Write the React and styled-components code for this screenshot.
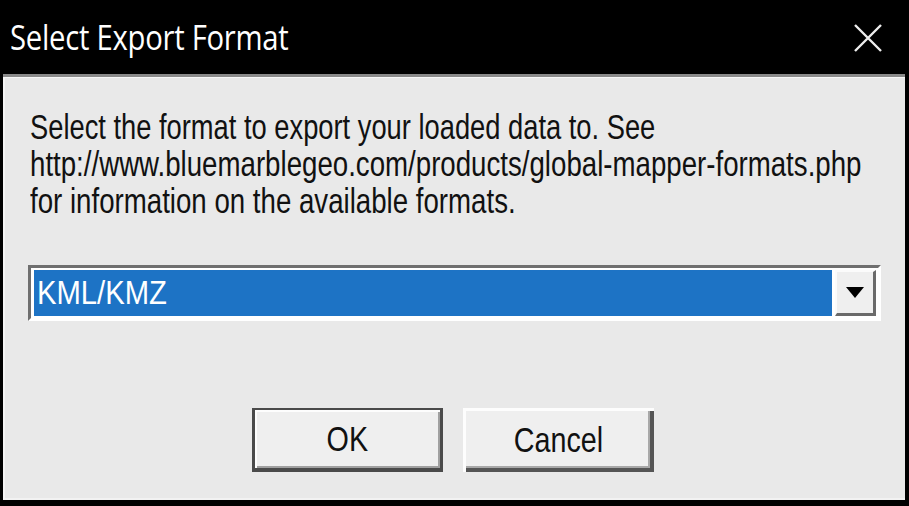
import React from 'react'
import styled, { createGlobalStyle } from 'styled-components'

const GlobalStyle = createGlobalStyle`
  html, body {
    margin: 0;
    padding: 0;
    background: #000;
  }
  #root {
    width: 909px;
    height: 506px;
    overflow: hidden;
  }
`

const Window = styled.div`
  box-sizing: border-box;
  width: 909px;
  height: 506px;
  background: #000;
  padding: 0 4px 6px 3px;
  display: flex;
  flex-direction: column;
  overflow: hidden;
  font-family: 'Liberation Sans', Arial, sans-serif;
`

const TitleBar = styled.div`
  height: 74px;
  flex: none;
  display: flex;
  align-items: center;
  justify-content: space-between;
  padding: 0 20px 0 7px;
  border-bottom: 3px solid #8a8a8a;
`

const Stretch = styled.span`
  display: inline-block;
  white-space: nowrap;
  transform: scaleX(${(p) => p.$sx || 0.8});
  transform-origin: ${(p) => (p.$center ? 'center' : 'left')} center;
`

const Title = styled.div`
  color: #fff;
  font-family: 'Open Sans', 'Noto Sans', sans-serif;
  font-size: 34px;
  line-height: 40px;
  letter-spacing: -0.3px;
`

const CloseButton = styled.div`
  width: 34px;
  height: 34px;
  display: flex;
  align-items: center;
  justify-content: center;
  margin-top: 2px;
`

const Body = styled.div`
  flex: 1;
  background: #e9e9e9;
  border-top: 1px solid #f7f7f7;
  border-left: 2px solid #f4f4f4;
  border-bottom: 2px solid #f2f2f2;
  padding: 30px 0 0 23px;
  display: flex;
  flex-direction: column;
  overflow: hidden;
`

const Message = styled.div`
  color: #111;
  font-size: 35px;
  line-height: 37px;
  padding-left: 2px;
`

const Line = styled.div`
  height: 37px;
`

const Combo = styled.div`
  box-sizing: border-box;
  margin-top: 46px;
  width: 853px;
  height: 56px;
  display: flex;
  border-top: 3px solid #6f6f6f;
  border-left: 3px solid #6f6f6f;
  border-right: 3px solid #fff;
  border-bottom: 3px solid #fff;
  background: #fff;
  padding: 2px 2px 2px 3px;
  gap: 3px;
`

const Selected = styled.div`
  flex: 1;
  background: #1d73c5;
  color: #fff;
  font-size: 34px;
  line-height: 44px;
  padding-left: 3px;
  overflow: hidden;
`

const DropButton = styled.div`
  box-sizing: border-box;
  width: 41px;
  background: #efefef;
  border-top: 2px solid #fbfbfb;
  border-left: 2px solid #fbfbfb;
  border-right: 3px solid #6a6a6a;
  border-bottom: 3px solid #6a6a6a;
  display: flex;
  align-items: center;
  justify-content: center;
`

const Buttons = styled.div`
  display: flex;
  justify-content: center;
  gap: 20px;
  margin-top: 87px;
  padding-right: 27px;
`

const Button = styled.div`
  box-sizing: border-box;
  width: 191px;
  height: 64px;
  background: #efefef;
  color: #111;
  font-size: 35px;
  display: flex;
  align-items: center;
  justify-content: center;
  border: ${(p) => (p.$default ? '3px solid #4a4a4a' : 'none')};
  border-top-width: 2px;
  border-left-width: 3px;
  border-bottom-width: 4px;
  box-shadow: ${(p) =>
    p.$default
      ? 'inset 2px 2px 0 #fdfdfd, inset -2px -2px 0 #a0a0a0'
      : 'inset 3px 3px 0 #fdfdfd, inset -4px -4px 0 #555, inset -6px -6px 0 #a8a8a8'};
`

export default function App() {
  return (
    <>
      <GlobalStyle />
      <Window>
        <TitleBar>
          <Title>
            <Stretch $sx={0.86}>Select Export Format</Stretch>
          </Title>
          <CloseButton>
            <svg width="30" height="28" viewBox="0 0 30 28">
              <path d="M2 1 L28 27 M28 1 L2 27" stroke="#eee" strokeWidth="2.4" fill="none" />
            </svg>
          </CloseButton>
        </TitleBar>
        <Body>
          <Message>
            <Line>
              <Stretch $sx={0.78}>Select the format to export your loaded data to. See</Stretch>
            </Line>
            <Line>
              <Stretch $sx={0.79}>http://www.bluemarblegeo.com/products/global-mapper-formats.php</Stretch>
            </Line>
            <Line>
              <Stretch $sx={0.79}>for information on the available formats.</Stretch>
            </Line>
          </Message>
          <Combo>
            <Selected>
              <Stretch $sx={0.86}>KML/KMZ</Stretch>
            </Selected>
            <DropButton>
              <svg width="18" height="11" viewBox="0 0 18 11">
                <path d="M0 0 H18 L9 11 Z" fill="#000" />
              </svg>
            </DropButton>
          </Combo>
          <Buttons>
            <Button $default>
              <Stretch $sx={0.82} $center>OK</Stretch>
            </Button>
            <Button>
              <Stretch $sx={0.82} $center>Cancel</Stretch>
            </Button>
          </Buttons>
        </Body>
      </Window>
    </>
  )
}
